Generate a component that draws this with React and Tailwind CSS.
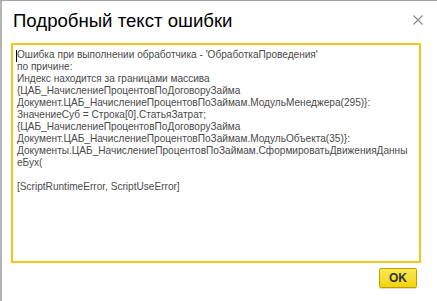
import React from "react";

const lines = [
  "Ошибка при выполнении обработчика - 'ОбработкаПроведения'",
  "по причине:",
  "Индекс находится за границами массива",
  "{ЦАБ_НачислениеПроцентовПоДоговоруЗайма",
  "Документ.ЦАБ_НачислениеПроцентовПоЗаймам.МодульМенеджера(295)}:",
  "ЗначениеСуб = Строка[0].СтатьяЗатрат;",
  "{ЦАБ_НачислениеПроцентовПоДоговоруЗайма",
  "Документ.ЦАБ_НачислениеПроцентовПоЗаймам.МодульОбъекта(35)}:",
  "Документы.ЦАБ_НачислениеПроцентовПоЗаймам.СформироватьДвиженияДанны",
  "еБух(",
  "\u00a0",
  "[ScriptRuntimeError, ScriptUseError]",
];

export default function App() {
  return (
    <div
      className="w-[437px] h-[301px] bg-white border-t border-t-[#a3a3a3] border-l-2 border-l-[#b4b4b4] flex flex-col overflow-hidden"
      style={{ fontFamily: '"Liberation Sans", Arial, sans-serif' }}
    >
      <div className="flex items-start justify-between pt-[8px] pl-[11px] pr-[14px] h-[42px]">
        <div className="text-[18.6px] leading-[24px] text-black">Подробный текст ошибки</div>
        <svg width="10" height="10" viewBox="0 0 10 10" className="mt-[6px]">
          <path d="M0.5 0.5 L9.5 9.5 M9.5 0.5 L0.5 9.5" stroke="#8a8a8a" strokeWidth="1.1" />
        </svg>
      </div>
      <div className="ml-[9px] w-[410px] h-[220px] border-2 border-[#f4c61c] pl-[4px] pt-[4px] relative">
        <div className="absolute left-[3px] top-[5px] w-px h-[12px] bg-black" />
        <div className="text-[10.1px] leading-[12px] text-[#4a4a4a] whitespace-pre">
          {lines.map((l, i) => (
            <div key={i}>{l}</div>
          ))}
        </div>
      </div>
      <div className="flex justify-end pr-[20px] pt-[5px]">
        <button className="w-[38px] h-[20px] rounded-[2px] border border-[#b9a200] bg-gradient-to-b from-[#fde94f] to-[#f2d400] text-[12px] leading-[18px] font-semibold text-[#333] shadow-[0_1px_1px_rgba(0,0,0,0.15)]">
          OK
        </button>
      </div>
    </div>
  );
}
